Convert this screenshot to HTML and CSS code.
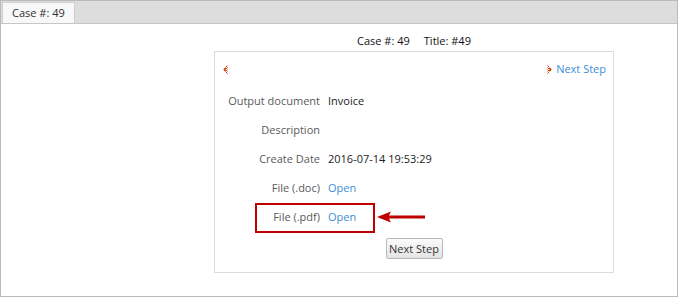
FILE: index.html
```html
<!DOCTYPE html>
<html lang="en">
<head>
  <meta charset="UTF-8">
  <title>Case #: 49</title>
  <link rel="stylesheet" href="styles.css">
</head>
<body>
  <div class="frame">
    <div class="tabbar">
      <div class="tab">Case #: 49</div>
    </div>

    <div class="main">
      <div class="case-title">
        <span>Case #: 49</span>
        <span>Title: #49</span>
      </div>

      <div class="card">
        <div class="nav">
          <a class="nav-prev" href="#">
            <svg width="6" height="9" viewBox="0 0 6 9" shape-rendering="crispEdges">
              <g fill="#ec9a72"><rect x="5" y="0" width="1" height="1"/><rect x="5" y="2" width="1" height="1"/><rect x="5" y="4" width="1" height="1"/><rect x="5" y="6" width="1" height="1"/><rect x="5" y="8" width="1" height="1"/><rect x="3" y="2" width="1" height="1"/><rect x="3" y="4" width="1" height="1"/><rect x="3" y="6" width="1" height="1"/><rect x="1" y="4" width="1" height="1"/></g>
              <g fill="#d2451c"><rect x="4" y="1" width="1" height="1"/><rect x="4" y="3" width="1" height="1"/><rect x="4" y="5" width="1" height="1"/><rect x="4" y="7" width="1" height="1"/><rect x="2" y="3" width="1" height="1"/><rect x="2" y="5" width="1" height="1"/><rect x="3" y="3" width="1" height="1"/><rect x="3" y="5" width="1" height="1"/><rect x="2" y="4" width="1" height="1"/></g>
            </svg>
          </a>
          <a class="nav-next" href="#">
            <svg width="6" height="9" viewBox="0 0 6 9" shape-rendering="crispEdges">
              <g fill="#ec9a72"><rect x="0" y="0" width="1" height="1"/><rect x="0" y="2" width="1" height="1"/><rect x="0" y="4" width="1" height="1"/><rect x="0" y="6" width="1" height="1"/><rect x="0" y="8" width="1" height="1"/><rect x="2" y="2" width="1" height="1"/><rect x="2" y="4" width="1" height="1"/><rect x="2" y="6" width="1" height="1"/><rect x="4" y="4" width="1" height="1"/></g>
              <g fill="#d2451c"><rect x="1" y="1" width="1" height="1"/><rect x="1" y="3" width="1" height="1"/><rect x="1" y="5" width="1" height="1"/><rect x="1" y="7" width="1" height="1"/><rect x="3" y="3" width="1" height="1"/><rect x="3" y="5" width="1" height="1"/><rect x="2" y="3" width="1" height="1"/><rect x="2" y="5" width="1" height="1"/><rect x="3" y="4" width="1" height="1"/></g>
            </svg>
            Next Step
          </a>
        </div>

        <div class="row">
          <div class="label">Output document</div>
          <div class="value">Invoice</div>
        </div>
        <div class="row">
          <div class="label">Description</div>
          <div class="value"></div>
        </div>
        <div class="row">
          <div class="label">Create Date</div>
          <div class="value">2016-07-14 19:53:29</div>
        </div>
        <div class="row">
          <div class="label">File (.doc)</div>
          <div class="value"><a href="#">Open</a></div>
        </div>
        <div class="row marked">
          <div class="label">File (.pdf)</div>
          <div class="value"><a href="#">Open</a></div>
          <span class="mark-box"></span>
          <svg class="mark-arrow" width="50" height="12" viewBox="0 0 50 12">
            <polygon points="0,6 14,0.5 12,4.5 48,4.5 48,7.5 12,7.5 14,11.5" fill="#c00000"/>
          </svg>
        </div>

        <div class="actions">
          <button class="btn">Next Step</button>
        </div>
      </div>
    </div>
  </div>
</body>
</html>
```

FILE: styles.css
```css
* {
  margin: 0;
  padding: 0;
  box-sizing: border-box;
}
body {
  font-family: "Open Sans", "Liberation Sans", sans-serif;
  font-size: 11px;
  color: #333;
  background: #fff;
}
a {
  color: #3e8ed6;
  text-decoration: none;
}
.frame {
  width: 678px;
  height: 297px;
  border: 1px solid #bababa;
}
.tabbar {
  height: 23px;
  background: #dddddd;
  border-bottom: 1px solid #c6c6c6;
  padding: 1px 0 0 1px;
}
.tab {
  width: 73px;
  height: 21px;
  background: #f8f8f8;
  border: 1px solid #d0d0d0;
  border-bottom: none;
  padding-left: 9px;
  line-height: 20px;
  color: #333;
}
.main {
  padding: 9px 0 0 213px;
}
.case-title {
  width: 400px;
  display: flex;
  justify-content: center;
  gap: 14px;
  line-height: 16px;
  color: #111;
  margin-bottom: 2px;
}
.card {
  width: 400px;
  border: 1px solid #dcdcdc;
  padding-bottom: 13px;
}
.nav {
  display: flex;
  justify-content: space-between;
  align-items: center;
  padding: 9px 7px 9px 7px;
  line-height: 16px;
}
.nav a {
  display: flex;
  align-items: center;
  gap: 3px;
}
.row {
  display: flex;
  height: 29px;
  line-height: 29px;
}
.label {
  width: 105px;
  text-align: right;
  color: #5a5a5a;
}
.value {
  margin-left: 8px;
  color: #222;
}
.marked {
  position: relative;
}
.mark-box {
  position: absolute;
  left: 40px;
  top: 1px;
  width: 120px;
  height: 30px;
  border: 2px solid #c00000;
}
.mark-arrow {
  position: absolute;
  left: 162px;
  top: 9px;
}
.actions {
  display: flex;
  justify-content: center;
  margin-top: 7px;
}
.btn {
  font-family: "Open Sans", "Liberation Sans", sans-serif;
  font-size: 11px;
  color: #333;
  height: 21px;
  width: 57px;
  border: 1px solid #b8b8b8;
  border-radius: 2px;
  background: linear-gradient(#fbfbfb, #e4e4e4);
  line-height: 19px;
}
```
